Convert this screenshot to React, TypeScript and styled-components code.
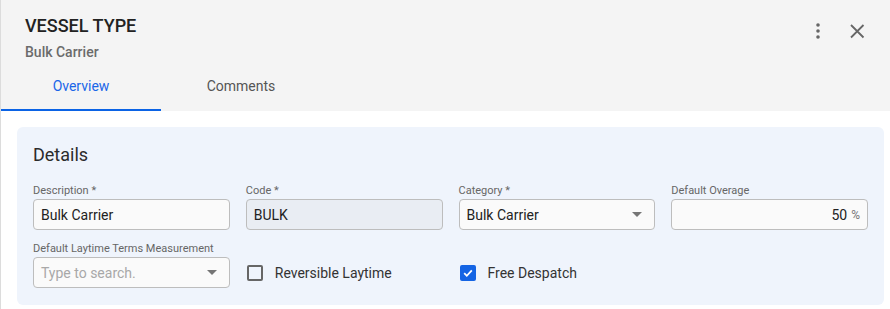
import React, { useState } from 'react';
import styled, { createGlobalStyle, css } from 'styled-components';

const GlobalStyle = createGlobalStyle`
  html, body {
    margin: 0;
    padding: 0;
    background: #ffffff;
  }

  body {
    font-family: Roboto, 'Liberation Sans', Arial, sans-serif;
    -webkit-font-smoothing: antialiased;
  }

  * {
    box-sizing: border-box;
  }
`;

const App: React.FC = () => {
  const [activeTab, setActiveTab] = useState<string>('overview');
  const [reversible, setReversible] = useState<boolean>(false);
  const [freeDespatch, setFreeDespatch] = useState<boolean>(true);

  return (
    <>
      <GlobalStyle />
      <Panel>
        <Header>
          <TitleRow>
            <TitleBlock>
              <Title>VESSEL TYPE</Title>
              <Subtitle>Bulk Carrier</Subtitle>
            </TitleBlock>
            <HeaderActions>
              <IconButton aria-label="More">
                <svg width="24" height="24" viewBox="0 0 24 24" fill="#666">
                  <circle cx="12" cy="6" r="1.8" />
                  <circle cx="12" cy="12" r="1.8" />
                  <circle cx="12" cy="18" r="1.8" />
                </svg>
              </IconButton>
              <IconButton aria-label="Close">
                <svg width="24" height="24" viewBox="0 0 24 24" fill="none" stroke="#666" strokeWidth="1.8">
                  <path d="M6 6 L18.5 18.5 M18.5 6 L6 18.5" />
                </svg>
              </IconButton>
            </HeaderActions>
          </TitleRow>
          <Tabs>
            <Tab active={activeTab === 'overview'} onClick={() => setActiveTab('overview')}>
              Overview
            </Tab>
            <Tab active={activeTab === 'comments'} onClick={() => setActiveTab('comments')}>
              Comments
            </Tab>
          </Tabs>
        </Header>

        <Card>
          <CardTitle>Details</CardTitle>
          <FieldGrid>
            <Field>
              <Label>Description *</Label>
              <InputBox>
                <InputText>Bulk Carrier</InputText>
              </InputBox>
            </Field>
            <Field>
              <Label>Code *</Label>
              <InputBox disabled>
                <InputText>BULK</InputText>
              </InputBox>
            </Field>
            <Field>
              <Label>Category *</Label>
              <InputBox>
                <InputText>Bulk Carrier</InputText>
                <Caret />
              </InputBox>
            </Field>
            <Field>
              <Label>Default Overage</Label>
              <InputBox align="right">
                <InputText>50</InputText>
                <Unit>%</Unit>
              </InputBox>
            </Field>

            <Field>
              <Label>Default Laytime Terms Measurement</Label>
              <InputBox>
                <InputText placeholder>Type to search.</InputText>
                <Caret />
              </InputBox>
            </Field>
            <CheckField onClick={() => setReversible(!reversible)}>
              <CheckBox checked={reversible}>
                {reversible && <CheckMark />}
              </CheckBox>
              <CheckLabel>Reversible Laytime</CheckLabel>
            </CheckField>
            <CheckField onClick={() => setFreeDespatch(!freeDespatch)}>
              <CheckBox checked={freeDespatch}>
                {freeDespatch && <CheckMark />}
              </CheckBox>
              <CheckLabel>Free Despatch</CheckLabel>
            </CheckField>
          </FieldGrid>
        </Card>
      </Panel>
    </>
  );
};

export default App;

const CheckMark: React.FC = () => (
  <svg width="12" height="12" viewBox="0 0 12 12" fill="none" stroke="#fff" strokeWidth="1.8">
    <path d="M2.2 6.2 L4.8 8.8 L9.8 3.4" />
  </svg>
);

const Panel = styled.div`
  width: 890px;
  min-height: 309px;
  border-left: 1px solid #dcdcdc;
  display: flex;
  flex-direction: column;
`;

const Header = styled.div`
  background-color: #f4f4f4;
  padding-top: 14px;
  display: flex;
  flex-direction: column;
`;

const TitleRow = styled.div`
  display: flex;
  justify-content: space-between;
  align-items: flex-start;
  padding-left: 24px;
  padding-right: 21px;
`;

const TitleBlock = styled.div`
  display: flex;
  flex-direction: column;
  gap: 4px;
`;

const Title = styled.div`
  font-size: 18px;
  line-height: 24px;
  font-weight: 500;
  color: #222;
`;

const Subtitle = styled.div`
  font-size: 14px;
  line-height: 20px;
  font-weight: 500;
  color: #6b6b6b;
`;

const HeaderActions = styled.div`
  display: flex;
  gap: 15px;
  padding-top: 5px;
`;

const IconButton = styled.button`
  width: 24px;
  height: 24px;
  padding: 0;
  border: none;
  background: none;
  display: flex;
  align-items: center;
  justify-content: center;
  cursor: pointer;
`;

const Tabs = styled.div`
  display: flex;
  margin-top: 1px;
`;

interface ITab {
  active?: boolean;
}

const Tab = styled.div<ITab>`
  width: 160px;
  height: 48px;
  display: flex;
  align-items: center;
  justify-content: center;
  font-size: 14px;
  color: #555;
  border-bottom: 2px solid transparent;
  cursor: pointer;

  ${({ active }) => active && css`
    color: #1a66e8;
    border-bottom-color: #0b63e5;
  `};
`;

const Card = styled.div`
  margin: 16px 6px 4px 16px;
  padding: 16px 16px 17px;
  background-color: #eff4fc;
  border-radius: 6px;
`;

const CardTitle = styled.div`
  font-size: 18px;
  line-height: 24px;
  color: #2b2b2b;
  margin-bottom: 16px;
`;

const FieldGrid = styled.div`
  display: grid;
  grid-template-columns: repeat(4, 1fr);
  column-gap: 16px;
  row-gap: 11px;
`;

const Field = styled.div`
  display: flex;
  flex-direction: column;
`;

const Label = styled.div`
  font-size: 11px;
  line-height: 16px;
  color: #666;
  white-space: nowrap;
`;

interface IInputBox {
  disabled?: boolean;
  align?: 'left' | 'right';
}

const InputBox = styled.div<IInputBox>`
  height: 31px;
  border: 1px solid #bdbdbd;
  border-radius: 4px;
  background-color: #fafafa;
  display: flex;
  align-items: center;
  padding: 0 12px 0 7px;
  gap: 4px;

  ${({ disabled }) => disabled && css`
    background-color: #e9edf3;
  `};

  ${({ align }) => align === 'right' && css`
    justify-content: flex-end;
    padding-right: 7px;
  `};
`;

interface IInputText {
  placeholder?: boolean;
}

const InputText = styled.span<IInputText>`
  flex: 0 1 auto;
  font-size: 14px;
  color: #222;

  ${({ placeholder }) => placeholder && css`
    color: #a8a8a8;
  `};
`;

const Caret = styled.span`
  margin-left: auto;
  width: 0;
  height: 0;
  border-left: 5px solid transparent;
  border-right: 5px solid transparent;
  border-top: 5px solid #757575;
`;

const Unit = styled.span`
  font-size: 12px;
  color: #777;
`;

const CheckField = styled.div`
  align-self: end;
  height: 31px;
  display: flex;
  align-items: center;
  gap: 12px;
  padding-left: 1px;
  cursor: pointer;
`;

interface ICheckBox {
  checked?: boolean;
}

const CheckBox = styled.div<ICheckBox>`
  width: 16px;
  height: 16px;
  border: 2px solid #666;
  border-radius: 2px;
  display: flex;
  align-items: center;
  justify-content: center;

  ${({ checked }) => checked && css`
    border-color: #1464e4;
    background-color: #1464e4;
  `};
`;

const CheckLabel = styled.span`
  font-size: 14px;
  color: #333;
`;
